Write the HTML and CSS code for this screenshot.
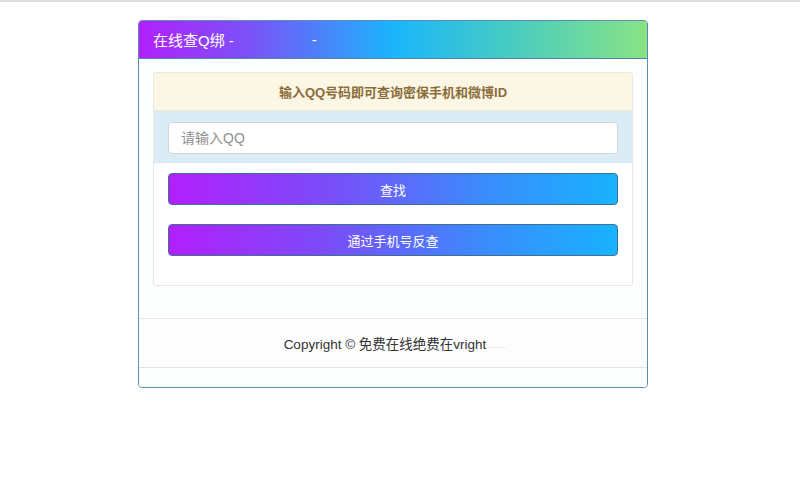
FILE: index.html
```html
<!DOCTYPE html>
<html lang="zh-CN">
<head>
<meta charset="utf-8">
<title>在线查Q绑</title>
<link rel="stylesheet" href="styles.css">
</head>
<body>
<div class="topline"></div>
<div class="page">
  <div class="panel">
    <div class="panel-heading">
      <span class="title">在线查Q绑 -</span><span class="blur"></span><span class="title">-</span>
    </div>
    <div class="panel-body">
      <div class="inner">
        <div class="notice">输入QQ号码即可查询密保手机和微博ID</div>
        <div class="input-row">
          <input class="qq-input" type="text" placeholder="请输入QQ">
        </div>
        <div class="actions">
          <button class="btn">查找</button>
          <button class="btn">通过手机号反查</button>
        </div>
      </div>
    </div>
    <div class="footer">
      <span class="copy">Copyright © 免费在线绝费在vright</span><span class="fade"></span>
    </div>
    <div class="panel-end"></div>
  </div>
</div>
</body>
</html>
```

FILE: styles.css
```css
html, body {
  margin: 0;
  padding: 0;
  background: #ffffff;
  font-family: "Liberation Sans", "Noto Sans CJK SC", sans-serif;
  font-size: 14px;
  color: #333333;
}

.topline {
  height: 2px;
  background: #dedede;
}

.page {
  padding: 18px 0 0 138px;
}

.panel {
  width: 508px;
  border: 1px solid #5a8db6;
  border-radius: 4px;
  background: #fdfefe;
  overflow: hidden;
}

.panel-heading {
  height: 37px;
  display: flex;
  align-items: center;
  padding: 0 14px;
  background: linear-gradient(to right, #b121fd 0%, #7a52f7 22%, #1ab5fd 50%, #45cbc4 72%, #89e385 100%);
  border-bottom: 1px solid #4e86a8;
  color: #ffffff;
  font-size: 15px;
}

.title {
  color: #ffffff;
}

.blur {
  display: inline-block;
  width: 78px;
}

.panel-body {
  padding: 13px 14px 32px;
}

.inner {
  border: 1px solid #ebe8df;
  border-radius: 3px;
  background: #ffffff;
  overflow: hidden;
}

.notice {
  height: 37px;
  display: flex;
  align-items: center;
  justify-content: center;
  background: #fcf6e4;
  color: #8a6d3b;
  font-weight: bold;
  font-size: 13px;
  border-bottom: 1px solid #eee6d3;
}

.input-row {
  background: #dcecf6;
  padding: 11px 14px 8px;
  border-bottom: 1px solid #d4e3ee;
}

.qq-input {
  display: block;
  box-sizing: border-box;
  width: 100%;
  height: 32px;
  padding: 0 12px;
  border: 1px solid #cdd6dc;
  border-radius: 4px;
  background: #ffffff;
  font-family: "Liberation Sans", "Noto Sans CJK SC", sans-serif;
  font-size: 14px;
  color: #555555;
  outline: none;
}

.qq-input::placeholder {
  color: #8f8f8f;
}

.actions {
  display: flex;
  flex-direction: column;
  gap: 19px;
  padding: 10px 14px 29px;
}

.btn {
  display: block;
  width: 100%;
  height: 32px;
  border: 1px solid #3e6f96;
  border-radius: 4px;
  background: linear-gradient(to right, #b21ffd 0%, #7b4cf9 35%, #3b8bfc 70%, #17b3fe 100%);
  color: #ffffff;
  font-family: "Liberation Sans", "Noto Sans CJK SC", sans-serif;
  font-size: 13px;
  padding: 0;
}

.footer {
  height: 48px;
  display: flex;
  align-items: center;
  justify-content: center;
  padding-left: 4px;
  background: #fdfdfd;
  border-top: 1px solid #e6e6e6;
  border-bottom: 1px solid #e2e2e2;
  color: #333333;
  font-size: 13.5px;
}

.fade {
  display: inline-block;
  width: 20px;
  height: 1px;
  margin-top: 8px;
  background: #e4eef4;
}

.panel-end {
  height: 19px;
  background: #fdfefe;
}
```
